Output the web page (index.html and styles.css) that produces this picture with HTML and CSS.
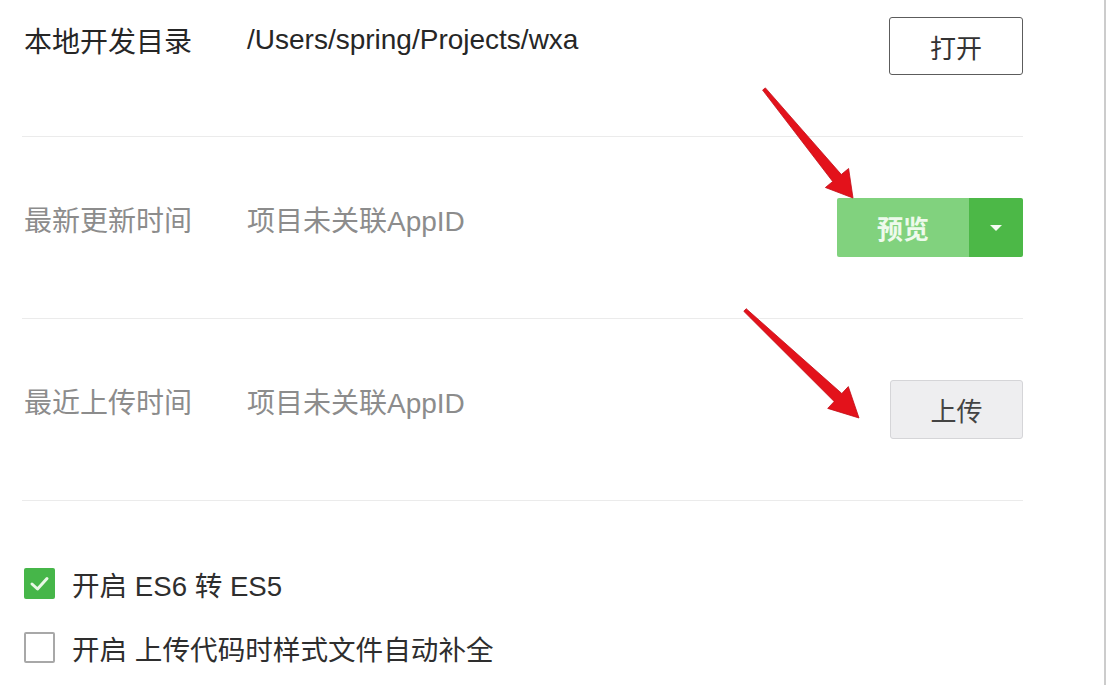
FILE: index.html
```html
<!DOCTYPE html>
<html lang="zh-CN">
<head>
<meta charset="utf-8">
<title>项目设置</title>
<link rel="stylesheet" href="styles.css">
</head>
<body>
<div class="page">
  <div class="panel">
    <div class="row row-top">
      <div class="label dark">本地开发目录</div>
      <div class="value dark">/Users/spring/Projects/wxa</div>
      <button class="btn btn-open">打开</button>
    </div>
    <div class="row">
      <div class="label">最新更新时间</div>
      <div class="value">项目未关联AppID</div>
      <div class="split">
        <button class="btn-preview">预览</button>
        <button class="btn-caret"><span class="caret"></span></button>
      </div>
    </div>
    <div class="row">
      <div class="label">最近上传时间</div>
      <div class="value">项目未关联AppID</div>
      <button class="btn btn-upload">上传</button>
    </div>
    <div class="options">
      <label class="opt">
        <span class="box checked">
          <svg viewBox="0 0 31 31" width="31" height="31"><polyline points="8,16 13.5,21 23,10.5" fill="none" stroke="#e9f8e6" stroke-width="3" stroke-linecap="round" stroke-linejoin="round"/></svg>
        </span>
        <span class="opt-text">开启 ES6 转 ES5</span>
      </label>
      <label class="opt">
        <span class="box"></span>
        <span class="opt-text">开启 上传代码时样式文件自动补全</span>
      </label>
    </div>
  </div>
  <svg class="arrows" viewBox="0 0 1108 685" width="1108" height="685">
    <polygon class="arrow" points="765.4,87.9 841.3,174.5 848.6,168.5 853,198 825.4,187.5 832.7,181.5 762.6,90.1"/>
    <polygon class="arrow" points="746.2,308.7 841.8,393.5 848.3,386.6 859,418 827.7,408.4 834.2,401.5 743.8,311.3"/>
  </svg>
</div>
</body>
</html>
```

FILE: styles.css
```css
html, body {
  margin: 0;
  padding: 0;
  background: #ffffff;
}

body {
  font-family: "Liberation Sans", "Noto Sans CJK SC", sans-serif;
  color: #333;
}

.page {
  position: relative;
  width: 1108px;
  height: 685px;
  overflow: hidden;
}

.panel {
  box-sizing: border-box;
  width: 1106px;
  height: 685px;
  border-right: 2px solid #cccccc;
  padding: 0 81px 0 22px;
}

.row {
  box-sizing: border-box;
  display: flex;
  align-items: center;
  height: 182px;
  border-bottom: 1px solid #ebebeb;
}

.row-top {
  height: 137px;
  padding-bottom: 44px;
}

.label {
  flex: none;
  width: 223px;
  padding-left: 2px;
  font-size: 28px;
  color: #8c8c8c;
  margin-bottom: 18px;
  white-space: nowrap;
}

.value {
  flex: 1;
  font-size: 28px;
  color: #8c8c8c;
  margin-bottom: 18px;
  white-space: nowrap;
}

.label.dark,
.value.dark {
  color: #262626;
  margin-bottom: 12px;
}

.btn {
  flex: none;
  margin-left: auto;
  font-family: "Liberation Sans", "Noto Sans CJK SC", sans-serif;
  font-size: 26px;
  padding: 0;
  cursor: pointer;
}

.btn-open {
  box-sizing: border-box;
  width: 134px;
  height: 58px;
  background: #ffffff;
  border: 1.5px solid #5c5c5c;
  border-radius: 3px;
  color: #333;
}

.split {
  flex: none;
  margin-left: auto;
  display: flex;
  width: 186px;
  height: 59px;
  border-radius: 2px;
  overflow: hidden;
}

.btn-preview {
  flex: none;
  width: 132px;
  height: 59px;
  border: none;
  padding: 0;
  background: #81d27e;
  color: #eefaec;
  font-family: "Liberation Sans", "Noto Sans CJK SC", sans-serif;
  font-size: 26px;
  font-weight: bold;
}

.btn-caret {
  flex: 1;
  height: 59px;
  border: none;
  padding: 0;
  background: #4cb847;
  display: flex;
  align-items: center;
  justify-content: center;
}

.caret {
  width: 0;
  height: 0;
  border-left: 6px solid transparent;
  border-right: 6px solid transparent;
  border-top: 6px solid #f4fbf2;
}

.btn-upload {
  box-sizing: border-box;
  width: 133px;
  height: 59px;
  background: #eeeef0;
  border: 1px solid #d5d5d8;
  border-radius: 3px;
  color: #444;
}

.options {
  padding-top: 67px;
  padding-left: 2px;
  display: flex;
  flex-direction: column;
  gap: 33px;
}

.opt {
  display: flex;
  align-items: center;
  gap: 17px;
  height: 31px;
}

.box {
  box-sizing: border-box;
  flex: none;
  width: 31px;
  height: 31px;
  border: 2px solid #a8a8a8;
  border-radius: 2px;
  background: #fff;
}

.box.checked {
  border: none;
  background: #46b649;
}

.box svg {
  display: block;
}

.opt-text {
  font-size: 27.6px;
  color: #2e2e2e;
  white-space: nowrap;
}

.arrows {
  position: absolute;
  top: 0;
  left: 0;
  pointer-events: none;
}

.arrow {
  fill: #e3121b;
  stroke: #c20d16;
  stroke-width: 0.8;
  stroke-linejoin: round;
}
```
